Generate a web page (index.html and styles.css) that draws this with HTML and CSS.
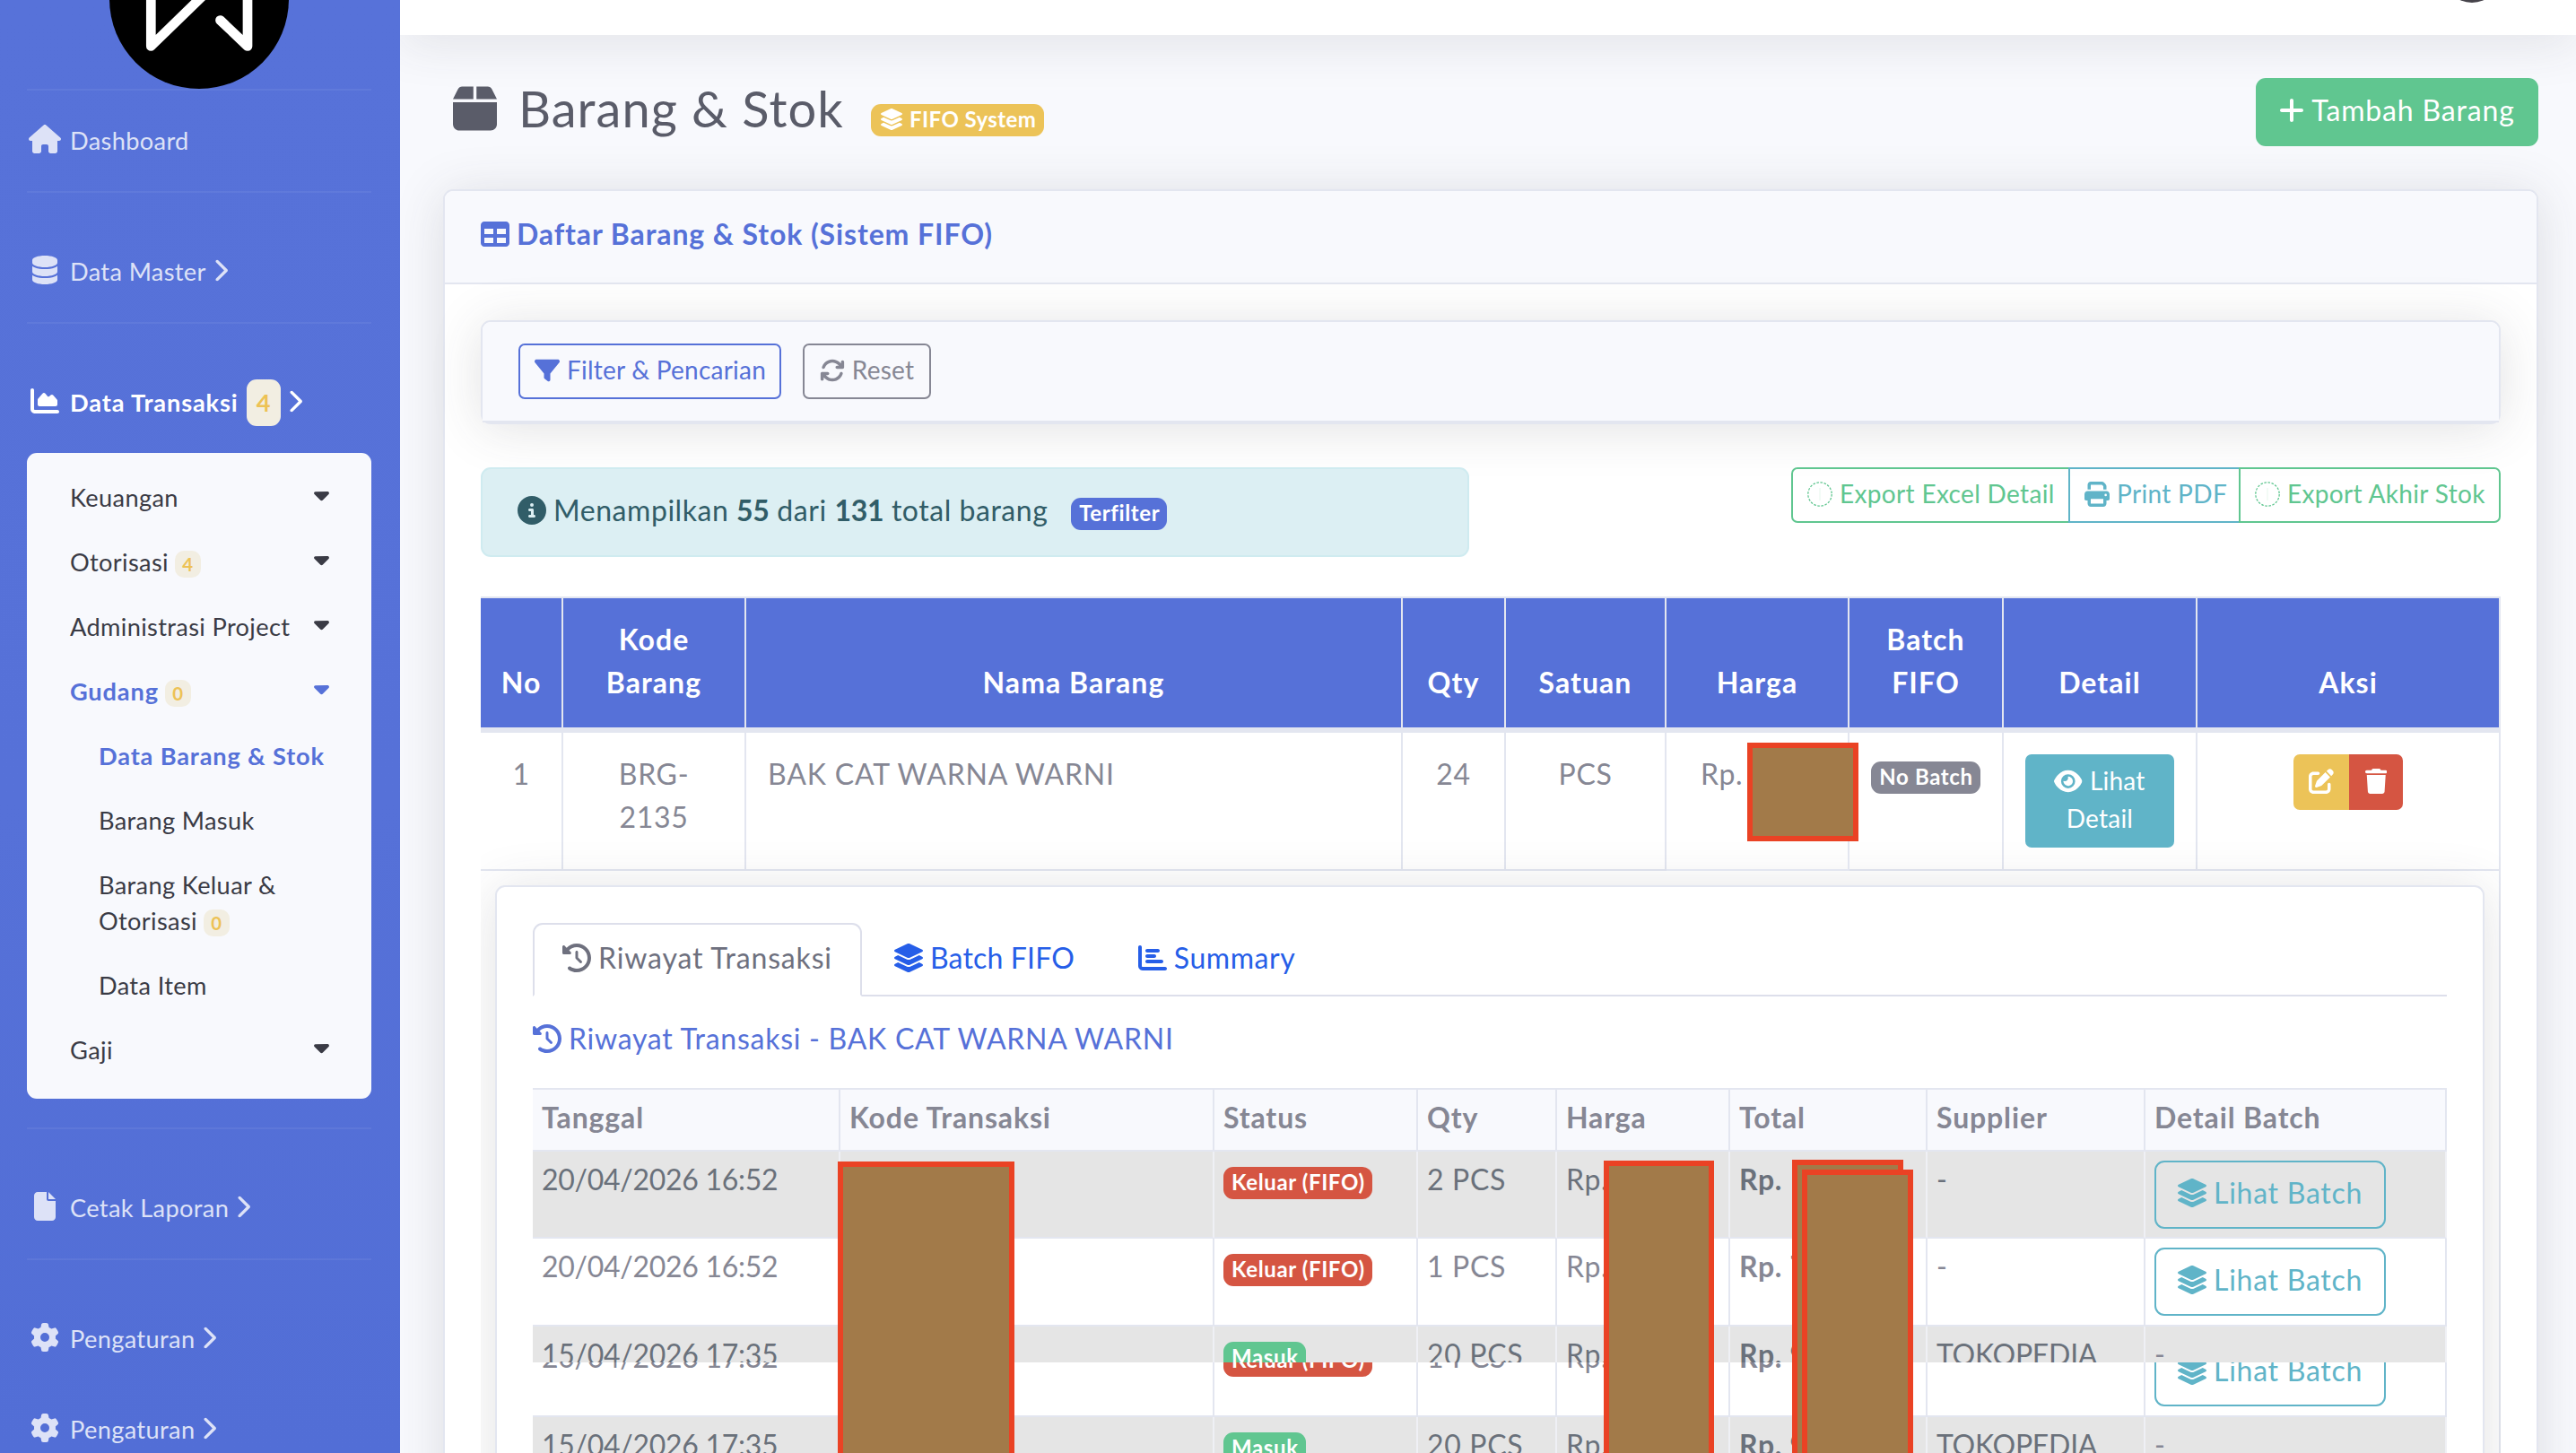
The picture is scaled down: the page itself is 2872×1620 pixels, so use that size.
FILE: index.html
```html
<!DOCTYPE html>
<html lang="id">
<head>
    <meta charset="UTF-8">
    <meta name="viewport" content="width=device-width, initial-scale=1.0">
    <title>Barang &amp; Stok</title>
    <link rel="stylesheet" href="styles.css">
</head>
<body>
    <!-- Icon set -->
    <svg class="icon-defs">
        <symbol id="house" viewBox="0 0 576 512"><path d="M575.8 255.5c0 18-15 32.1-32 32.1h-32l.7 160.2c0 2.7-.2 5.4-.5 8.1V472c0 22.1-17.9 40-40 40H456c-1.1 0-2.2 0-3.3-.1c-1.4 .1-2.8 .1-4.2 .1H416 392c-22.1 0-40-17.9-40-40V448 384c0-17.7-14.3-32-32-32H256c-17.7 0-32 14.3-32 32v64 24c0 22.1-17.9 40-40 40H160 128.1c-1.5 0-3-.1-4.5-.2c-1.2 .1-2.4 .2-3.6 .2H104c-22.1 0-40-17.9-40-40V360c0-.9 0-1.9 .1-2.8V287.6H32c-18 0-32-14-32-32.1c0-9 3-17 10-24L266.4 8c7-7 15-8 22-8s15 2 21 7L564.8 231.5c8 7 12 15 11 24z"/></symbol>
        <symbol id="database" viewBox="0 0 448 512"><path d="M448 80v48c0 44.2-100.3 80-224 80S0 172.2 0 128V80C0 35.8 100.3 0 224 0S448 35.8 448 80zM393.2 214.7c20.8-7.4 39.9-16.9 54.8-28.6V288c0 44.2-100.3 80-224 80S0 332.2 0 288V186.1c14.9 11.8 34 21.2 54.8 28.6C99.7 230.7 159.5 240 224 240s124.3-9.3 169.2-25.3zM0 346.1c14.9 11.8 34 21.2 54.8 28.6C99.7 390.7 159.5 400 224 400s124.3-9.3 169.2-25.3c20.8-7.4 39.9-16.9 54.8-28.6V432c0 44.2-100.3 80-224 80S0 476.2 0 432V346.1z"/></symbol>
        <symbol id="chart-area" viewBox="0 0 512 512"><path d="M64 64c0-17.7-14.3-32-32-32S0 46.3 0 64V400c0 44.2 35.8 80 80 80H480c17.7 0 32-14.3 32-32s-14.3-32-32-32H80c-8.8 0-16-7.2-16-16V64zm96 288H448c17.7 0 32-14.3 32-32V251.8c0-7.6-2.7-15-7.7-20.8l-65.8-76.8c-12.1-14.2-33.7-15-46.9-1.8l-21 21c-10 10-26.4 9.2-35.4-1.6l-39.2-47c-12.6-15.1-35.7-15.4-48.7-.6L135.9 215c-5.1 5.8-7.9 13.3-7.9 21.1v84c0 17.7 14.3 32 32 32z"/></symbol>
        <symbol id="file" viewBox="0 0 384 512"><path d="M0 64C0 28.7 28.7 0 64 0H224V128c0 17.7 14.3 32 32 32H384V448c0 35.3-28.7 64-64 64H64c-35.3 0-64-28.7-64-64V64zm384 64H256V0L384 128z"/></symbol>
        <symbol id="gear" viewBox="0 0 512 512"><path d="M495.9 166.6c3.2 8.7 .5 18.4-6.4 24.6l-43.3 39.4c1.1 8.3 1.7 16.8 1.7 25.4s-.6 17.1-1.7 25.4l43.3 39.4c6.9 6.2 9.6 15.9 6.4 24.6c-4.4 11.9-9.7 23.3-15.8 34.3l-4.7 8.1c-6.6 11-14 21.4-22.1 31.2c-5.9 7.2-15.7 9.6-24.5 6.8l-55.7-17.7c-13.4 10.3-28.2 18.9-44 25.4l-12.5 57.1c-2 9.1-9 16.3-18.2 17.8c-13.8 2.3-28 3.5-42.5 3.5s-28.7-1.2-42.5-3.5c-9.2-1.5-16.2-8.7-18.2-17.8l-12.5-57.1c-15.8-6.5-30.6-15.1-44-25.4L83.1 425.9c-8.8 2.8-18.6 .3-24.5-6.8c-8.1-9.8-15.5-20.2-22.1-31.2l-4.7-8.1c-6.1-11-11.4-22.4-15.8-34.3c-3.2-8.7-.5-18.4 6.4-24.6l43.3-39.4C64.6 273.1 64 264.6 64 256s.6-17.1 1.7-25.4L22.4 191.2c-6.9-6.2-9.6-15.9-6.4-24.6c4.4-11.9 9.7-23.3 15.8-34.3l4.7-8.1c6.6-11 14-21.4 22.1-31.2c5.9-7.2 15.7-9.6 24.5-6.8l55.7 17.7c13.4-10.3 28.2-18.9 44-25.4l12.5-57.1c2-9.1 9-16.3 18.2-17.8C227.3 1.2 241.5 0 256 0s28.7 1.2 42.5 3.5c9.2 1.5 16.2 8.7 18.2 17.8l12.5 57.1c15.8 6.5 30.6 15.1 44 25.4l55.7-17.7c8.8-2.8 18.6-.3 24.5 6.8c8.1 9.8 15.5 20.2 22.1 31.2l4.7 8.1c6.1 11 11.4 22.4 15.8 34.3zM256 336a80 80 0 1 0 0-160 80 80 0 1 0 0 160z"/></symbol>
        <symbol id="chevron" viewBox="0 0 320 512"><path d="M310.6 233.4c12.5 12.5 12.5 32.8 0 45.3l-192 192c-12.5 12.5-32.8 12.5-45.3 0s-12.5-32.8 0-45.3L242.7 256 73.4 86.6c-12.5-12.5-12.5-32.8 0-45.3s32.8-12.5 45.3 0l192 192z"/></symbol>
        <symbol id="caret" viewBox="0 0 320 512"><path d="M137.4 374.6c12.5 12.5 32.8 12.5 45.3 0l128-128c9.2-9.2 11.9-22.9 6.9-34.9s-16.6-19.8-29.6-19.8L32 192c-12.9 0-24.6 7.8-29.6 19.8s-2.2 25.7 6.9 34.9l128 128z"/></symbol>
        <symbol id="box" viewBox="0 0 448 512"><path d="M50.7 58.5L0 160H208V32H93.7C75.5 32 58.9 42.3 50.7 58.5zM240 160H448L397.3 58.5C389.1 42.3 372.5 32 354.3 32H240V160zm208 32H0V416c0 35.3 28.7 64 64 64H384c35.3 0 64-28.7 64-64V192z"/></symbol>
        <symbol id="layers" viewBox="32 0 512 512"><path d="M264.5 5.2c14.9-6.9 32.1-6.9 47 0l218.6 101c8.5 3.9 13.9 12.4 13.9 21.8s-5.4 17.9-13.9 21.8l-218.6 101c-14.9 6.9-32.1 6.9-47 0L45.9 149.8C37.4 145.8 32 137.3 32 128s5.4-17.9 13.9-21.8L264.5 5.2zM476.9 209.6l53.2 24.6c8.5 3.9 13.9 12.4 13.9 21.8s-5.4 17.9-13.9 21.8l-218.6 101c-14.9 6.9-32.1 6.9-47 0L45.9 277.8C37.4 273.8 32 265.3 32 256s5.4-17.9 13.9-21.8l53.2-24.6 152 70.2c23.4 10.8 50.4 10.8 73.8 0l152-70.2zm-152 198.2l152-70.2 53.2 24.6c8.5 3.9 13.9 12.4 13.9 21.8s-5.4 17.9-13.9 21.8l-218.6 101c-14.9 6.9-32.1 6.9-47 0L45.9 405.8C37.4 401.8 32 393.3 32 384s5.4-17.9 13.9-21.8l53.2-24.6 152 70.2c23.4 10.8 50.4 10.8 73.8 0z"/></symbol>
        <symbol id="plus" viewBox="0 0 448 512"><path d="M256 80c0-17.7-14.3-32-32-32s-32 14.3-32 32V224H48c-17.7 0-32 14.3-32 32s14.3 32 32 32H192V432c0 17.7 14.3 32 32 32s32-14.3 32-32V288H400c17.7 0 32-14.3 32-32s-14.3-32-32-32H256V80z"/></symbol>
        <symbol id="table" viewBox="0 0 512 512"><path d="M64 256V160H224v96H64zm0 64H224v96H64V320zm224 96V320H448v96H288zM448 256H288V160H448v96zM64 32C28.7 32 0 60.7 0 96V416c0 35.3 28.7 64 64 64H448c35.3 0 64-28.7 64-64V96c0-35.3-28.7-64-64-64H64z"/></symbol>
        <symbol id="filter" viewBox="0 0 512 512"><path d="M3.9 54.9C10.5 40.9 24.5 32 40 32H472c15.5 0 29.5 8.9 36.1 22.9s4.6 30.5-5.2 42.5L320 320.9V448c0 12.1-6.8 23.2-17.7 28.6s-23.8 4.3-33.5-3l-64-48c-8.1-6-12.8-15.5-12.8-25.6V320.9L9 97.3C-.7 85.4-2.8 68.8 3.9 54.9z"/></symbol>
        <symbol id="sync" viewBox="0 0 512 512"><path d="M105.1 202.6c7.7-21.8 20.2-42.3 37.8-59.8c62.5-62.5 163.8-62.5 226.3 0L386.3 160H352c-17.7 0-32 14.3-32 32s14.3 32 32 32H463.5c0 0 0 0 0 0h.4c17.7 0 32-14.3 32-32V80c0-17.7-14.3-32-32-32s-32 14.3-32 32v35.2L414.4 97.6c-87.5-87.5-229.3-87.5-316.8 0C73.2 122 55.6 150.7 44.8 181.4c-5.9 16.7 2.9 34.9 19.5 40.8s34.9-2.9 40.8-19.5zM39 289.3c-5 1.5-9.8 4.2-13.7 8.2c-4 4-6.7 8.8-8.1 14c-.3 1.2-.6 2.5-.8 3.8c-.3 1.7-.4 3.4-.4 5.1V432c0 17.7 14.3 32 32 32s32-14.3 32-32V396.9l17.6 17.5 0 0c87.5 87.4 229.3 87.4 316.7 0c24.4-24.4 42.1-53.1 52.9-83.7c5.9-16.7-2.9-34.9-19.5-40.8s-34.9 2.9-40.8 19.5c-7.7 21.8-20.2 42.3-37.8 59.8c-62.5 62.5-163.8 62.5-226.3 0l-.1-.1L125.6 352H160c17.7 0 32-14.3 32-32s-14.3-32-32-32H48.4c-1.6 0-3.2 .1-4.8 .3s-3.1 .5-4.6 1z"/></symbol>
        <symbol id="info" viewBox="0 0 512 512"><path d="M256 512A256 256 0 1 0 256 0a256 256 0 1 0 0 512zM216 336h24V272H216c-13.3 0-24-10.7-24-24s10.7-24 24-24h48c13.3 0 24 10.7 24 24v88h8c13.3 0 24 10.7 24 24s-10.7 24-24 24H216c-13.3 0-24-10.7-24-24s10.7-24 24-24zm40-208a32 32 0 1 1 0 64 32 32 0 1 1 0-64z"/></symbol>
        <symbol id="print" viewBox="0 0 512 512"><path d="M128 0C92.7 0 64 28.7 64 64v96h64V64H354.7L384 93.3V160h64V93.3c0-17-6.7-33.3-18.7-45.3L400 18.7C388 6.7 371.7 0 354.7 0H128zM384 352v32 64H128V384 368 352H384zm64 32h32c17.7 0 32-14.3 32-32V256c0-35.3-28.7-64-64-64H64c-35.3 0-64 28.7-64 64v96c0 17.7 14.3 32 32 32H64v64c0 35.3 28.7 64 64 64H384c35.3 0 64-28.7 64-64V384zM432 248a24 24 0 1 1 0 48 24 24 0 1 1 0-48z"/></symbol>
        <symbol id="dotted" viewBox="0 0 28 28"><circle cx="14" cy="14" r="13.2" fill="none" stroke="currentColor" stroke-width="1.3" stroke-dasharray="2.6 1.55"/><path d="M13.7 7h.6v14h-.6z" opacity=".25"/></symbol>
        <symbol id="eye" viewBox="0 0 576 512"><path d="M288 32c-80.8 0-145.5 36.8-192.6 80.6C48.6 156 17.3 208 2.5 243.7c-3.3 7.9-3.3 16.7 0 24.6C17.3 304 48.6 356 95.4 399.4C142.5 443.2 207.2 480 288 480s145.5-36.8 192.6-80.6c46.8-43.5 78.1-95.4 93-131.1c3.3-7.9 3.3-16.7 0-24.6c-14.9-35.7-46.2-87.7-93-131.1C433.5 68.8 368.8 32 288 32zM144 256a144 144 0 1 1 288 0 144 144 0 1 1 -288 0zm144-64c0 35.3-28.7 64-64 64c-7.1 0-13.9-1.2-20.3-3.3c-5.5-1.8-11.9 1.6-11.7 7.4c.3 6.9 1.3 13.8 3.2 20.7c13.7 51.2 66.4 81.6 117.6 67.9s81.6-66.4 67.9-117.6c-11.1-41.5-47.8-69.4-88.6-71.1c-5.8-.2-9.2 6.1-7.4 11.7c2.1 6.4 3.3 13.2 3.3 20.3z"/></symbol>
        <symbol id="edit" viewBox="0 0 512 512"><path d="M471.6 21.7c-21.9-21.9-57.3-21.9-79.2 0L362.3 51.7l97.9 97.9 30.1-30.1c21.9-21.9 21.9-57.3 0-79.2L471.6 21.7zm-299.2 220c-6.1 6.1-10.8 13.6-13.5 21.9l-29.6 88.8c-2.9 8.6-.6 18.1 5.8 24.6s15.9 8.7 24.6 5.8l88.8-29.6c8.2-2.7 15.7-7.4 21.9-13.5L437.7 172.3 339.7 74.3 172.4 241.7zM96 64C43 64 0 107 0 160V416c0 53 43 96 96 96H352c53 0 96-43 96-96V320c0-17.7-14.3-32-32-32s-32 14.3-32 32v96c0 17.7-14.3 32-32 32H96c-17.7 0-32-14.3-32-32V160c0-17.7 14.3-32 32-32h96c17.7 0 32-14.3 32-32s-14.3-32-32-32H96z"/></symbol>
        <symbol id="trash" viewBox="0 0 448 512"><path d="M135.2 17.7L128 32H32C14.3 32 0 46.3 0 64S14.3 96 32 96H416c17.7 0 32-14.3 32-32s-14.3-32-32-32H320l-7.2-14.3C307.4 6.8 296.3 0 284.2 0H163.8c-12.1 0-23.2 6.8-28.6 17.7zM416 128H32L53.2 467c1.6 25.3 22.6 45 47.9 45H346.9c25.3 0 46.3-19.7 47.9-45L416 128z"/></symbol>
        <symbol id="history" viewBox="0 0 512 512"><path d="M75 75L41 41C25.9 25.9 0 36.6 0 57.9V168c0 13.3 10.7 24 24 24H134.1c21.4 0 32.1-25.9 17-41l-30.8-30.8C155 85.5 203 64 256 64c106 0 192 86 192 192s-86 192-192 192c-40.8 0-78.6-12.7-109.7-34.4c-14.5-10.1-34.4-6.6-44.6 7.9s-6.6 34.4 7.9 44.6C151.2 495 201.7 512 256 512c141.4 0 256-114.6 256-256S397.4 0 256 0C185.3 0 121.3 28.7 75 75zm181 53c-13.3 0-24 10.7-24 24V256c0 6.4 2.5 12.5 7 17l72 72c9.4 9.4 24.6 9.4 33.9 0s9.4-24.6 0-33.9l-65-65V152c0-13.3-10.7-24-24-24z"/></symbol>
        <symbol id="chart-bar" viewBox="0 0 512 512"><path d="M32 32c17.7 0 32 14.3 32 32V400c0 8.8 7.2 16 16 16H480c17.7 0 32 14.3 32 32s-14.3 32-32 32H80c-44.2 0-80-35.8-80-80V64C0 46.3 14.3 32 32 32zm96 96c0-17.7 14.3-32 32-32l192 0c17.7 0 32 14.3 32 32s-14.3 32-32 32H160c-17.7 0-32-14.3-32-32zm32 64H288c17.7 0 32 14.3 32 32s-14.3 32-32 32H160c-17.7 0-32-14.3-32-32s14.3-32 32-32zm0 96H416c17.7 0 32 14.3 32 32s-14.3 32-32 32H160c-17.7 0-32-14.3-32-32s14.3-32 32-32z"/></symbol>
    </svg>

    <div class="wrapper">
        <!-- Sidebar -->
        <aside class="sidebar">
            <div class="brand">
                <svg class="logo" viewBox="0 0 200 200">
                    <circle cx="100" cy="100" r="100" fill="#000"/>
                    <path d="M46.3 60V152.5L124 77M123.5 123.5L154 152.5V60" fill="none" stroke="#fff" stroke-width="10.7" stroke-linecap="round" stroke-linejoin="round"/>
                </svg>
            </div>
            <hr>
            <a class="nav-link first"><span class="nav-icon"><svg class="i wide"><use href="#house"/></svg></span><span>Dashboard</span></a>
            <hr>
            <a class="nav-link"><span class="nav-icon"><svg class="i tall"><use href="#database"/></svg></span><span>Data Master</span><svg class="chev"><use href="#chevron"/></svg></a>
            <hr>
            <a class="nav-link active"><span class="nav-icon"><svg class="i"><use href="#chart-area"/></svg></span><span>Data Transaksi</span><span class="count count-lg">4</span><svg class="chev"><use href="#chevron"/></svg></a>
            <div class="submenu">
                <a class="sub-item"><span>Keuangan</span><svg class="caret"><use href="#caret"/></svg></a>
                <a class="sub-item"><span>Otorisasi <span class="count">4</span></span><svg class="caret"><use href="#caret"/></svg></a>
                <a class="sub-item"><span>Administrasi Project</span><svg class="caret"><use href="#caret"/></svg></a>
                <a class="sub-item current"><span>Gudang <span class="count">0</span></span><svg class="caret"><use href="#caret"/></svg></a>
                <a class="sub-item child current">Data Barang &amp; Stok</a>
                <a class="sub-item child">Barang Masuk</a>
                <a class="sub-item child"><span>Barang Keluar &amp;<br>Otorisasi <span class="count">0</span></span></a>
                <a class="sub-item child">Data Item</a>
                <a class="sub-item"><span>Gaji</span><svg class="caret"><use href="#caret"/></svg></a>
            </div>
            <hr>
            <a class="nav-link"><span class="nav-icon"><svg class="i narrow"><use href="#file"/></svg></span><span>Cetak Laporan</span><svg class="chev"><use href="#chevron"/></svg></a>
            <hr>
            <a class="nav-link"><span class="nav-icon"><svg class="i"><use href="#gear"/></svg></span><span>Pengaturan</span><svg class="chev"><use href="#chevron"/></svg></a>
            <a class="nav-link last"><span class="nav-icon"><svg class="i"><use href="#gear"/></svg></span><span>Pengaturan</span><svg class="chev"><use href="#chevron"/></svg></a>
        </aside>

        <!-- Content -->
        <main class="content">
            <div class="topbar"><span class="avatar"></span></div>

            <div class="page">
                <div class="page-head">
                    <h1><span class="title-icon"><svg><use href="#box"/></svg></span>Barang &amp; Stok <span class="badge warning"><svg class="i"><use href="#layers"/></svg>FIFO System</span></h1>
                    <a class="btn btn-add"><svg class="i tall"><use href="#plus"/></svg>Tambah Barang</a>
                </div>

                <div class="card">
                    <div class="card-header"><svg class="i"><use href="#table"/></svg>Daftar Barang &amp; Stok (Sistem FIFO)</div>
                    <div class="card-body">
                        <div class="card filter-card">
                            <div class="filter-bar">
                                <a class="btn btn-sm btn-filter"><svg class="i"><use href="#filter"/></svg>Filter &amp; Pencarian</a>
                                <a class="btn btn-sm btn-reset"><svg class="i"><use href="#sync"/></svg>Reset</a>
                            </div>
                        </div>

                        <div class="toolbar">
                            <div class="alert"><svg class="i"><use href="#info"/></svg>Menampilkan <b>55</b> dari <b>131</b> total barang <span class="badge primary">Terfilter</span></div>
                            <div class="btn-group">
                                <a class="btn btn-sm excel"><svg class="i"><use href="#dotted"/></svg>Export Excel Detail</a>
                                <a class="btn btn-sm pdf"><svg class="i"><use href="#print"/></svg>Print PDF</a>
                                <a class="btn btn-sm stok"><svg class="i"><use href="#dotted"/></svg>Export Akhir Stok</a>
                            </div>
                        </div>

                        <div class="table-responsive">
                            <table class="stock">
                                <colgroup><col class="c-no"><col class="c-kode"><col class="c-nama"><col class="c-qty"><col class="c-satuan"><col class="c-harga"><col class="c-batch"><col class="c-detail"><col class="c-aksi"></colgroup>
                                <thead>
                                    <tr><th>No</th><th>Kode Barang</th><th>Nama Barang</th><th>Qty</th><th>Satuan</th><th>Harga</th><th>Batch FIFO</th><th>Detail</th><th>Aksi</th></tr>
                                </thead>
                                <tbody>
                                    <tr class="item">
                                        <td>1</td>
                                        <td>BRG-<br>2135</td>
                                        <td class="name">BAK CAT WARNA WARNI</td>
                                        <td>24</td>
                                        <td>PCS</td>
                                        <td class="price">Rp.<span class="mask mask-price"></span></td>
                                        <td><span class="badge secondary">No Batch</span></td>
                                        <td><a class="btn btn-sm btn-detail"><svg class="i wide"><use href="#eye"/></svg>Lihat<br>Detail</a></td>
                                        <td><div class="actions"><a class="edit"><svg class="i"><use href="#edit"/></svg></a><a class="trash"><svg class="i tall"><use href="#trash"/></svg></a></div></td>
                                    </tr>
                                    <tr>
                                        <td colspan="9" class="detail">
                                            <div class="card detail-card">
                                                <div class="tabs">
                                                    <a class="tab tab-active"><svg class="i"><use href="#history"/></svg>Riwayat Transaksi</a>
                                                    <a class="tab tab-batch"><svg class="i"><use href="#layers"/></svg>Batch FIFO</a>
                                                    <a class="tab tab-summary"><svg class="i"><use href="#chart-bar"/></svg>Summary</a>
                                                </div>
                                                <h6><svg class="i"><use href="#history"/></svg>Riwayat Transaksi - BAK CAT WARNA WARNI</h6>

                                                <div class="history">
                                                    <div class="row head"><div>Tanggal</div><div>Kode Transaksi</div><div>Status</div><div>Qty</div><div>Harga</div><div>Total</div><div>Supplier</div><div>Detail Batch</div></div>
                                                    <div class="row odd"><div class="date">20/04/2026 16:52</div><div></div><div><span class="badge danger">Keluar (FIFO)</span></div><div>2 PCS</div><div>Rp.</div><div><b>Rp.</b></div><div>-</div><div><a class="btn btn-batch"><svg class="i"><use href="#layers"/></svg>Lihat Batch</a></div></div>
                                                    <div class="row even"><div class="date">20/04/2026 16:52</div><div></div><div><span class="badge danger">Keluar (FIFO)</span></div><div>1 PCS</div><div>Rp.</div><div><b>Rp. 7</b></div><div>-</div><div><a class="btn btn-batch"><svg class="i"><use href="#layers"/></svg>Lihat Batch</a></div></div>
                                                    <div class="slice slice-top">
                                                        <div class="row odd"><div class="date">15/04/2026 17:35</div><div></div><div><span class="badge success">Masuk</span></div><div>20 PCS</div><div>Rp.</div><div><b>Rp. 9</b></div><div class="caps">TOKOPEDIA</div><div class="dash">-</div></div>
                                                    </div>
                                                    <div class="slice slice-bottom">
                                                        <div class="row even"><div class="date">20/04/2026 17:32</div><div></div><div><span class="badge danger">Keluar (FIFO)</span></div><div>1 PCS</div><div>Rp.</div><div><b>Rp.</b></div><div></div><div><a class="btn btn-batch"><svg class="i"><use href="#layers"/></svg>Lihat Batch</a></div></div>
                                                    </div>
                                                    <div class="row odd"><div class="date">15/04/2026 17:35</div><div></div><div><span class="badge success">Masuk</span></div><div>20 PCS</div><div>Rp.</div><div><b>Rp. 9</b></div><div class="caps">TOKOPEDIA</div><div class="dash">-</div></div>
                                                    <span class="mask mask-code"></span>
                                                    <span class="mask mask-unit"></span>
                                                    <span class="mask mask-total"></span>
                                                    <span class="mask mask-total-front"></span>
                                                </div>
                                            </div>
                                        </td>
                                    </tr>
                                </tbody>
                            </table>
                        </div>
                    </div>
                </div>
            </div>
        </main>
    </div>
</body>
</html>
```
FILE: styles.css
```css
* {
    margin: 0;
    padding: 0;
    box-sizing: border-box;
}

body {
    font-family: Lato, "Open Sans", sans-serif;
    font-size: 32px;
    line-height: 48px;
    letter-spacing: 0.021em;
    color: #868794;
    overflow: hidden;
}

b, th {
    font-weight: 700;
}

.icon-defs {
    position: absolute;
    width: 0;
    height: 0;
}

svg {
    fill: currentColor;
}

.i {
    width: 1em;
    height: 1em;
    vertical-align: -0.125em;
    margin-right: 8px;
}

.i.wide { width: 1.125em; }
.i.tall { width: 0.875em; }
.i.narrow { width: 0.75em; }

.wrapper {
    display: flex;
    height: 1620px;
    overflow: hidden;
}

/* Sidebar */
.sidebar {
    flex: none;
    width: 446px;
    padding: 0 32px 0 30px;
    background: linear-gradient(180deg, #5772d9 0%, #5671d8 55%, #526ed6 100%);
    font-size: 27.2px;
    line-height: 40px;
    letter-spacing: 0.013em;
    color: #dde2f7;
}

.sidebar hr {
    height: 2px;
    border: none;
    background: rgba(255, 255, 255, 0.06);
}

.brand {
    display: flex;
    justify-content: center;
    align-items: flex-end;
    height: 99px;
}

.logo {
    flex: none;
    width: 200px;
    height: 200px;
}

.nav-link {
    display: flex;
    align-items: center;
    padding: 68px 0 36px;
}

.nav-link.first { padding-top: 36px; }
.nav-link.last { padding-top: 25px; }

.nav-link.active {
    color: #fff;
    font-weight: 700;
    letter-spacing: 0.032em;
}

.nav-icon {
    display: flex;
    justify-content: center;
    width: 40px;
    margin: 0 8px 4px 0;
    font-size: 32px;
}

.nav-icon .i {
    margin: 0;
}

.chev {
    width: 17px;
    height: 27px;
    margin: 0 0 4px 7px;
}

.count {
    display: inline-block;
    padding: 0 8px;
    border-radius: 10px;
    background: #f2eee2;
    color: #edc255;
    font-size: 20.4px;
    font-weight: 700;
    line-height: 30px;
    letter-spacing: 0.03em;
}

.count-lg {
    padding: 0 11px;
    border-radius: 11px;
    font-size: 27.2px;
    line-height: 52px;
    margin: -6px 0 -6px 9px;
}

.submenu {
    padding: 16px 0;
    border-radius: 11px;
    background: #f8f9fd;
    color: #3a3b45;
    margin-bottom: 32px;
}

.sub-item {
    display: flex;
    justify-content: space-between;
    align-items: center;
    padding: 14px 47px 18px 48px;
}

.sub-item.child {
    padding-left: 80px;
    padding-right: 20px;
}

.sub-item.current {
    color: #5671d8;
    font-weight: 700;
    letter-spacing: 0.031em;
}

.caret {
    width: 17px;
    height: 27px;
    margin-bottom: 8px;
}

/* Top bar and heading */
.content {
    flex: 1;
    min-width: 0;
    background: #f8f9fd;
    overflow: hidden;
}

.topbar {
    display: flex;
    justify-content: flex-end;
    align-items: flex-end;
    height: 39px;
    padding: 0 84px 36px 0;
    background: #fff;
    box-shadow: 0 5px 56px rgba(58, 59, 69, 0.15);
}

.avatar {
    flex: none;
    width: 64px;
    height: 64px;
    border-radius: 50%;
    background: #46434a;
}

.page {
    padding: 48px 42px 0 48px;
}

.page-head {
    display: flex;
    justify-content: space-between;
    height: 76px;
    margin-bottom: 48px;
}

h1 {
    color: #5a5c69;
    font-size: 56px;
    font-weight: 400;
    line-height: 67px;
    letter-spacing: 0.018em;
    white-space: nowrap;
}

.title-icon {
    display: inline-flex;
    justify-content: center;
    width: 70px;
    margin-right: 14px;
    vertical-align: -7px;
}

.title-icon svg {
    width: 49px;
    height: 56px;
}

.badge {
    display: inline-block;
    height: 36px;
    padding: 5px 8px 7px 9px;
    border-radius: 11px;
    color: #fff;
    font-size: 24px;
    font-weight: 700;
    line-height: 24px;
    letter-spacing: 0.026em;
    white-space: nowrap;
}

.badge.warning {
    margin-left: 15px;
    padding-left: 11px;
    padding-right: 9px;
    background: #ecc358;
    letter-spacing: 0.018em;
}

.badge.primary { background: #5671d8; margin-left: 17px; }
.badge.secondary { background: #868794; }
.badge.danger { background: #d55542; }
.badge.success { background: #60c690; }

.btn {
    display: inline-block;
    padding: 10px 24px 14px;
    border: 2px solid transparent;
    border-radius: 11px;
    text-align: center;
    white-space: nowrap;
}

.btn-add {
    width: 315px;
    background: #60c690;
    color: #fff;
    letter-spacing: 0.026em;
}

.btn-sm {
    padding: 6px 16px 10px;
    border-radius: 7px;
    font-size: 28px;
    line-height: 42px;
    letter-spacing: 0.008em;
}

/* Cards */
.card {
    border: 2px solid #e3e6f0;
    border-radius: 11px;
    background: #fff;
    box-shadow: 0 5px 56px rgba(58, 59, 69, 0.15);
}

.card-header {
    padding: 24px 40px 30px;
    border-bottom: 2px solid #e3e6f0;
    border-radius: 9px 9px 0 0;
    background: #f8f9fd;
    color: #5671d8;
    font-weight: 700;
    letter-spacing: 0.028em;
}

.card-body {
    padding: 40px 40px 0;
}

.filter-bar {
    display: flex;
    gap: 24px;
    padding: 24px 40px;
    border-bottom: 2px solid #e3e6f0;
    border-radius: 9px 9px 0 0;
    background: #f8f9fd;
}

.btn-filter {
    width: 293px;
    border-color: #5671d8;
    color: #5671d8;
}

.btn-reset {
    width: 143px;
    border-color: #868794;
    color: #868794;
}

.toolbar {
    display: flex;
    justify-content: space-between;
    align-items: flex-start;
    margin: 48px 0 44px;
}

.alert {
    width: 1102px;
    height: 100px;
    padding: 22px 39px 26px;
    border: 2px solid #cfebf0;
    border-radius: 11px;
    background: #dceff3;
    color: #315d68;
    letter-spacing: 0.017em;
}

.alert b {
    letter-spacing: -0.01em;
}

.btn-group {
    display: flex;
}

.btn-group .btn {
    border-radius: 0;
    margin-left: -2px;
    letter-spacing: 0.012em;
}

.btn-group .excel { width: 311px; border-color: #60c690; color: #60c690; border-radius: 7px 0 0 7px; }
.btn-group .pdf { width: 192px; border-color: #60b4c8; color: #60b4c8; }
.btn-group .stok { width: 292px; border-color: #60c690; color: #60c690; border-radius: 0 7px 7px 0; }

/* Stock table */
.table-responsive {
    overflow: hidden;
}

.stock {
    width: 2252px;
    table-layout: fixed;
    border-collapse: separate;
    border-spacing: 0;
}

.c-no { width: 92px; }
.c-kode { width: 204px; }
.c-nama { width: 732px; }
.c-qty { width: 115px; }
.c-satuan { width: 179px; }
.c-harga { width: 204px; }
.c-batch { width: 172px; }
.c-detail { width: 216px; }
.c-aksi { width: 338px; }

.stock th {
    height: 152px;
    padding: 22px 24px 26px;
    border: solid #e3e6f0;
    border-width: 2px 2px 6px 0;
    background: #5671d8;
    color: #fff;
    letter-spacing: 0.033em;
    text-align: center;
    vertical-align: bottom;
}

.stock th:first-child,
.stock th:nth-child(4) {
    padding-left: 10px;
    padding-right: 10px;
}

.stock td {
    border: solid #e3e6f0;
    border-width: 0 2px 2px 0;
    vertical-align: top;
}

.stock .item td {
    height: 154px;
    padding-top: 22px;
    text-align: center;
}

.stock .item td.name {
    padding-left: 24px;
    text-align: left;
    letter-spacing: 0.026em;
}

.stock .item td.price {
    position: relative;
    padding-left: 38px;
    text-align: left;
}

/* Hidden values */
.mask {
    position: absolute;
    z-index: 2;
    border: 6px solid #ea4224;
    background: #a27a49;
}

.mask-price { left: 90px; top: 11px; width: 124px; height: 110px; }
.mask-code { left: 340px; top: 82px; width: 197px; height: 500px; }
.mask-unit { left: 1194px; top: 81px; width: 123px; height: 500px; }
.mask-total { left: 1404px; top: 80px; width: 124px; height: 500px; }
.mask-total-front { left: 1415px; top: 91px; width: 124px; height: 500px; }

.btn-detail {
    width: 166px;
    margin-top: 2px;
    background: #60b4c8;
    color: #fff;
}

.actions {
    display: flex;
    justify-content: center;
    margin-top: 2px;
    font-size: 28px;
}

.actions a {
    display: flex;
    align-items: center;
    justify-content: center;
    height: 62px;
    padding-bottom: 2px;
    color: #fff;
}

.actions .i { margin: 0; }
.actions .edit { width: 62px; background: #ecc358; border-radius: 7px 0 0 7px; }
.actions .trash { width: 60px; background: #d55542; border-radius: 0 7px 7px 0; }

/* Expanded detail */
.stock td.detail {
    padding: 16px 16px 0;
}

.detail-card {
    height: 900px;
    padding: 40px;
}

.tabs {
    display: flex;
    border-bottom: 2px solid #dddfeb;
}

.tab {
    padding: 13px 0 17px;
    border: 2px solid transparent;
    border-radius: 11px 11px 0 0;
    margin-bottom: -2px;
    color: #265ee8;
    text-align: center;
    white-space: nowrap;
}

.tab-active {
    width: 367px;
    border-color: #dddfeb #dddfeb #fff;
    background: #fff;
    color: #6e707e;
    letter-spacing: 0.026em;
}

.tab-batch {
    width: 273px;
    letter-spacing: 0.005em;
}

.tab-summary {
    width: 245px;
    letter-spacing: 0.017em;
}

h6 {
    margin: 28px 0 36px;
    color: #5671d8;
    font-size: 32px;
    font-weight: 400;
    line-height: 38px;
    letter-spacing: 0.023em;
}

.history {
    position: relative;
}

.row {
    display: grid;
    grid-template-columns: 343px 417px 227px 155px 193px 220px 243px 336px;
    height: 97px;
}

.row > div {
    padding: 7px 0 0 10px;
    border: solid #e3e6f0;
    border-width: 0 2px 2px 0;
    white-space: nowrap;
}

.row.head {
    height: 71px;
}

.row.head > div {
    border-top-width: 2px;
    background: #f8f9fd;
    font-weight: 700;
    letter-spacing: 0.027em;
}

.row.odd > div {
    border-right-color: #eff0f5;
    background: #e5e5e5;
    color: #6a717b;
}

.row.even {
    height: 98px;
}

.row .date {
    letter-spacing: -0.009em;
}

.row .caps {
    letter-spacing: -0.008em;
}

.row.odd > .dash {
    color: #868794;
}

.slice {
    overflow: hidden;
}

.slice-top {
    height: 40px;
}

.slice-bottom {
    display: flex;
    flex-direction: column;
    justify-content: flex-end;
    height: 61px;
}

.slice .row {
    flex: none;
}

.btn-batch {
    width: 258px;
    height: 76px;
    margin-top: 3px;
    border-color: #60b4c8;
    color: #60b4c8;
    letter-spacing: 0.023em;
}
```
